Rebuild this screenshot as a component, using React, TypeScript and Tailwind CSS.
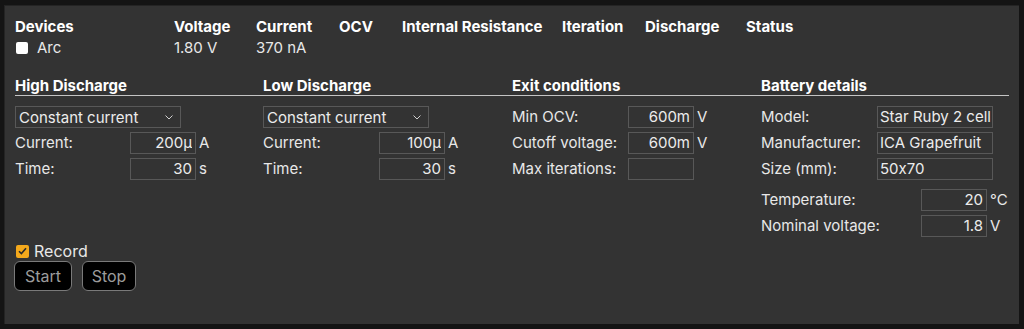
import React from 'react';

// Small numeric/text field with a fixed box like the native inputs in the screenshot
function Field({ value, w = 'w-[66px]', left = false }: { value: string; w?: string; left?: boolean }) {
  return (
    <input
      readOnly
      value={value}
      className={`${w} h-[22px] border border-[#585858] bg-[#333333] text-[15px] text-[#ececec] outline-none [font-feature-settings:'calt'_0] ${
        left ? 'text-left pl-[2px]' : 'text-right pr-[3px]'
      } font-['Inter',sans-serif]`}
    />
  );
}

function Row({ label, labelW, children }: { label: string; labelW: string; children: React.ReactNode }) {
  return (
    <div className="flex h-[22px] items-center">
      <span className={`${labelW} shrink-0`}>{label}</span>
      {children}
    </div>
  );
}

function Unit({ children }: { children: React.ReactNode }) {
  return <span className="ml-[3px]">{children}</span>;
}

function ModeSelect() {
  return (
    <div className="relative w-[166px] h-[22px]">
      <select className="w-full h-full appearance-none border border-[#585858] bg-[#333333] pl-[3px] text-[15px] text-[#ececec] outline-none">
        <option>Constant current</option>
        <option>Constant voltage</option>
      </select>
      <svg className="pointer-events-none absolute right-[8px] top-[9px]" width="8" height="5" viewBox="0 0 8 5">
        <polyline points="0.5,0.5 4,4 7.5,0.5" fill="none" stroke="#cfcfcf" strokeWidth="1" />
      </svg>
    </div>
  );
}

function SectionHead({ children }: { children: React.ReactNode }) {
  return <div className="h-[19px] leading-[19px] font-bold text-white">{children}</div>;
}

export default function App() {
  return (
    <div className="h-[329px] w-[1024px] bg-[#141414] pt-[5px] pl-[4px] pr-[5px] pb-[5px] font-['Inter',sans-serif] text-[15px] text-[#e8e8e8] [font-feature-settings:'calt'_0]">
      <div className="h-full border-t border-l border-[#242424] bg-[#333333] pt-[11px] pl-[10px] pr-[10px]">
        {/* live readings */}
        <div className="grid grid-cols-[159px_82px_83px_63px_160px_83px_101px_1fr] gap-y-[2px] leading-[19px]">
          {['Devices', 'Voltage', 'Current', 'OCV', 'Internal Resistance', 'Iteration', 'Discharge', 'Status'].map((h) => (
            <div key={h} className="font-bold text-white">
              {h}
            </div>
          ))}
          <div className="flex items-center gap-[9px] pl-[1px]">
            <span className="h-[12px] w-[12px] rounded-[2px] bg-white" />
            <span>Arc</span>
          </div>
          <div>1.80 V</div>
          <div>370 nA</div>
          <div />
          <div />
          <div />
          <div />
          <div />
        </div>

        {/* settings */}
        <div className="mt-[19px] grid grid-cols-[248px_249px_249px_1fr] border-b border-[#c4c4c4] w-[994px]">
          <SectionHead>High Discharge</SectionHead>
          <SectionHead>Low Discharge</SectionHead>
          <SectionHead>Exit conditions</SectionHead>
          <SectionHead>Battery details</SectionHead>
        </div>

        <div className="mt-[10px] grid grid-cols-[248px_249px_249px_1fr] w-[994px]">
          <div className="flex flex-col gap-[4px]">
            <ModeSelect />
            <Row label="Current:" labelW="w-[115px]">
              <Field value="200μ" />
              <Unit>A</Unit>
            </Row>
            <Row label="Time:" labelW="w-[115px]">
              <Field value="30" />
              <Unit>s</Unit>
            </Row>
          </div>

          <div className="flex flex-col gap-[4px]">
            <ModeSelect />
            <Row label="Current:" labelW="w-[116px]">
              <Field value="100μ" />
              <Unit>A</Unit>
            </Row>
            <Row label="Time:" labelW="w-[116px]">
              <Field value="30" />
              <Unit>s</Unit>
            </Row>
          </div>

          <div className="flex flex-col gap-[4px]">
            <Row label="Min OCV:" labelW="w-[116px]">
              <Field value="600m" />
              <Unit>V</Unit>
            </Row>
            <Row label="Cutoff voltage:" labelW="w-[116px]">
              <Field value="600m" />
              <Unit>V</Unit>
            </Row>
            <Row label="Max iterations:" labelW="w-[116px]">
              <Field value="" />
            </Row>
          </div>

          <div className="flex flex-col gap-[4px]">
            <Row label="Model:" labelW="w-[116px]">
              <Field value="Star Ruby 2 cell" w="w-[116px]" left />
            </Row>
            <Row label="Manufacturer:" labelW="w-[116px]">
              <Field value="ICA Grapefruit" w="w-[116px]" left />
            </Row>
            <Row label="Size (mm):" labelW="w-[116px]">
              <Field value="50x70" w="w-[116px]" left />
            </Row>
            <div className="mt-[5px] flex flex-col gap-[4px]">
              <Row label="Temperature:" labelW="w-[160px]">
                <Field value="20" />
                <Unit>°C</Unit>
              </Row>
              <Row label="Nominal voltage:" labelW="w-[160px]">
                <Field value="1.8" />
                <Unit>V</Unit>
              </Row>
            </div>
          </div>
        </div>

        {/* run controls */}
        <div className="mt-[4px] flex h-[20px] items-center gap-[5px] pl-[1px] text-[16px] leading-[20px]">
          <span className="flex h-[13px] w-[13px] items-center justify-center rounded-[2px] bg-[#f4a91c]">
            <svg width="9" height="8" viewBox="0 0 9 8">
              <polyline points="1,4.2 3.4,6.6 8,1.2" fill="none" stroke="#2a2a2a" strokeWidth="1.6" />
            </svg>
          </span>
          <span>Record</span>
        </div>
        <div className="-ml-px flex gap-[10px]">
          <button className="h-[30px] w-[58px] rounded-[6px] border border-[#7a7a7a] bg-black text-[16px] text-[#9c9c9c]">
            Start
          </button>
          <button className="h-[30px] w-[54px] rounded-[6px] border border-[#7a7a7a] bg-black text-[16px] text-[#9c9c9c]">
            Stop
          </button>
        </div>
      </div>
    </div>
  );
}
